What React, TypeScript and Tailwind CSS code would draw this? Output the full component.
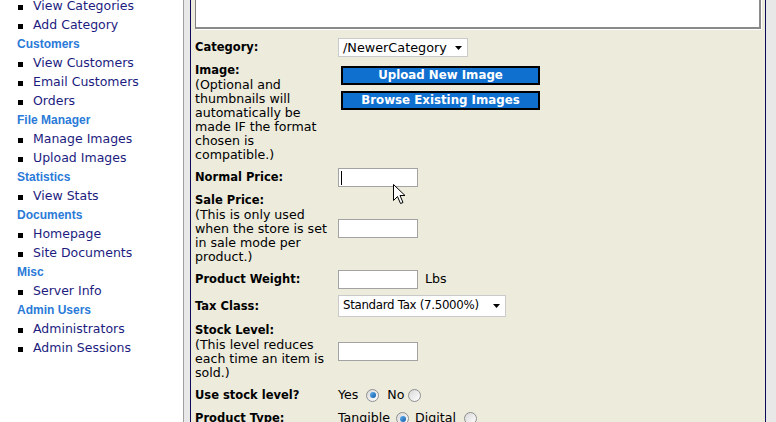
import React from "react";

type NavGroup = { title: string; items: string[] };

const topItems = ["View Categories", "Add Category"];

const groups: NavGroup[] = [
  { title: "Customers", items: ["View Customers", "Email Customers", "Orders"] },
  { title: "File Manager", items: ["Manage Images", "Upload Images"] },
  { title: "Statistics", items: ["View Stats"] },
  { title: "Documents", items: ["Homepage", "Site Documents"] },
  { title: "Misc", items: ["Server Info"] },
  { title: "Admin Users", items: ["Administrators", "Admin Sessions"] },
];

function NavItem({ label }: { label: string }) {
  return (
    <div className="flex items-center h-[19px] pt-[2px] pl-[18px] text-[12.5px] text-[#1c1c80] whitespace-nowrap">
      <span className="w-[5px] h-[5px] bg-black mt-[1px] shrink-0" />
      <span className="ml-[10px]">{label}</span>
    </div>
  );
}

function Select({ value, w, h, size }: { value: string; w: string; h: string; size: string }) {
  return (
    <div
      className={`flex items-center justify-between bg-white border border-[#cacaca] pl-[4px] pr-[5px] text-black whitespace-nowrap ${w} ${h} ${size}`}
    >
      <span>{value}</span>
      <svg width="7" height="4" viewBox="0 0 7 4" className="ml-[4px] shrink-0">
        <path d="M0 0H7L3.5 4Z" fill="#000" />
      </svg>
    </div>
  );
}

function TextInput({ caret }: { caret?: boolean }) {
  return (
    <div className="w-[80px] h-[19px] bg-white border border-[#a3a3a3] flex items-center pl-[2px]">
      {caret && <span className="w-px h-[14px] bg-black" />}
    </div>
  );
}

function Radio({ checked }: { checked?: boolean }) {
  return (
    <span className="w-[13px] h-[13px] rounded-full border border-[#8f8f8f] bg-gradient-to-br from-[#d8d8d8] to-[#ffffff] flex items-center justify-center shrink-0">
      {checked && (
        <span className="w-[6px] h-[6px] rounded-full bg-gradient-to-br from-[#63b3f0] to-[#0b5aa8]" />
      )}
    </span>
  );
}

function Label({ title, lines }: { title: string; lines?: string[] }) {
  return (
    <div className="w-[143px] shrink-0">
      <div className="font-bold text-[11.5px] leading-[15px]">{title}</div>
      {lines?.map((l, i) => (
        <div key={i} className="text-[12.6px] leading-[14px] whitespace-nowrap">
          {l}
        </div>
      ))}
    </div>
  );
}

export default function App() {
  return (
    <div className="relative flex w-[776px] h-[422px] overflow-hidden bg-[#e8e8e8] font-['DejaVu_Sans',sans-serif]">
      {/* sidebar */}
      <div className="w-[184px] shrink-0 bg-white border-r border-[#a0a0a0] -mt-[4px]">
        {topItems.map((it) => (
          <NavItem key={it} label={it} />
        ))}
        {groups.map((g) => (
          <div key={g.title}>
            <div className="h-[19px] flex items-center pl-[17px] font-['Liberation_Sans',sans-serif] font-bold text-[12px] text-[#2a7ad8]">
              {g.title}
            </div>
            {g.items.map((it) => (
              <NavItem key={it} label={it} />
            ))}
          </div>
        ))}
      </div>

      {/* main panel */}
      <div className="ml-[6px] w-[576px] shrink-0 bg-[#ecebdc] border-x border-[#0b0b5c] px-[4px] text-black">
        {/* description textarea (scrolled) */}
        <div className="h-[40px] -mt-[11px] bg-white border border-[#808080] border-r-2 border-b-2 border-r-[#8a8a8a] border-b-[#8a8a8a] shadow-[1px_1px_0_#ffffff]" />

        <div className="mt-[9px] flex flex-col gap-[6px]">
          {/* category */}
          <div className="flex items-center">
            <Label title="Category:" />
            <Select value="/NewerCategory" w="w-[130px]" h="h-[19px]" size="text-[12.8px]" />
          </div>

          {/* image */}
          <div className="flex items-start">
            <Label
              title="Image:"
              lines={[
                "(Optional and",
                "thumbnails will",
                "automatically be",
                "made IF the format",
                "chosen is",
                "compatible.)",
              ]}
            />
            <div className="ml-[3px] mt-[3px] flex flex-col gap-[6px]">
              <div className="w-[199px] h-[19px] bg-[#0f70d0] border-2 border-black flex items-center justify-center text-white font-bold text-[11.8px]">
                Upload New Image
              </div>
              <div className="w-[199px] h-[19px] bg-[#0f70d0] border-2 border-black flex items-center justify-center text-white font-bold text-[11.8px]">
                Browse Existing Images
              </div>
            </div>
          </div>

          {/* normal price */}
          <div className="flex items-center">
            <Label title="Normal Price:" />
            <TextInput caret />
          </div>

          {/* sale price */}
          <div className="flex items-center">
            <Label
              title="Sale Price:"
              lines={["(This is only used", "when the store is set", "in sale mode per", "product.)"]}
            />
            <TextInput />
          </div>

          {/* weight */}
          <div className="flex items-center">
            <Label title="Product Weight:" />
            <TextInput />
            <span className="ml-[7px] text-[12.6px]">Lbs</span>
          </div>

          {/* tax */}
          <div className="flex items-center">
            <Label title="Tax Class:" />
            <Select
              value="Standard Tax (7.5000%)"
              w="w-[168px]"
              h="h-[22px]"
              size="text-[11.8px] tracking-[-0.3px]"
            />
          </div>

          {/* stock level */}
          <div className="flex items-center">
            <Label
              title="Stock Level:"
              lines={["(This level reduces", "each time an item is", "sold.)"]}
            />
            <TextInput />
          </div>

          {/* use stock */}
          <div className="flex items-center h-[19px]">
            <Label title="Use stock level?" />
            <div className="flex items-center text-[12.6px]">
              <span>Yes</span>
              <span className="ml-[8px]"><Radio checked /></span>
              <span className="ml-[8px]">No</span>
              <span className="ml-[4px]"><Radio /></span>
            </div>
          </div>

          {/* product type */}
          <div className="flex items-start">
            <Label title="Product Type:" />
            <div className="flex items-center h-[15px] text-[12.6px]">
              <span>Tangible</span>
              <span className="ml-[6px]"><Radio checked /></span>
              <span className="ml-[6px]">Digital</span>
              <span className="ml-[8px]"><Radio /></span>
            </div>
          </div>
        </div>
      </div>

      {/* mouse pointer */}
      <svg
        width="13"
        height="21"
        viewBox="0 0 13 21"
        className="absolute left-[393px] top-[184px] pointer-events-none"
      >
        <path
          d="M0.5 0.5V16.5L4.5 12.5L7.5 19.5L10 18.5L7 11.5H12Z"
          fill="#fff"
          stroke="#000"
          strokeWidth="1"
          strokeLinejoin="miter"
        />
      </svg>
    </div>
  );
}
